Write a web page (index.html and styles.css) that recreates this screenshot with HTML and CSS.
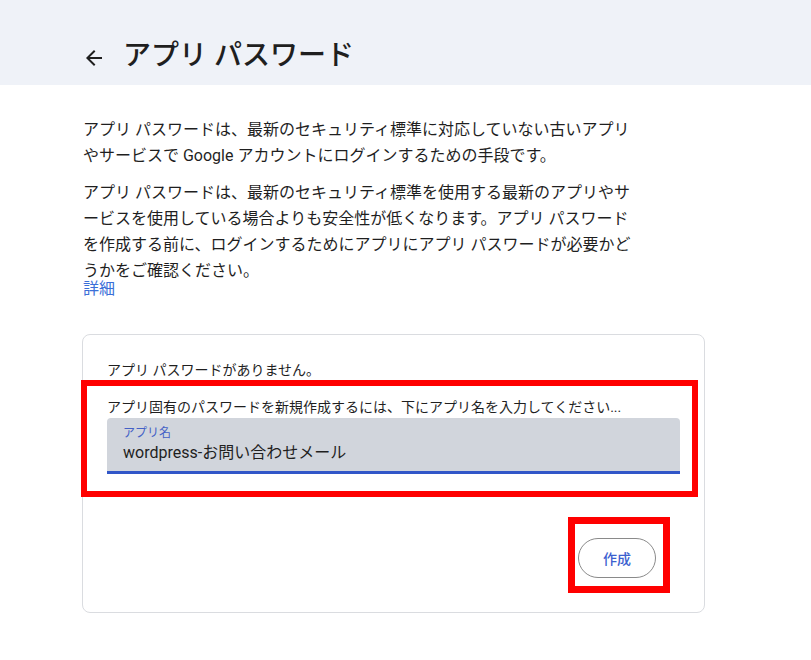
FILE: index.html
```html
<!DOCTYPE html>
<html lang="ja">
<head>
    <meta charset="UTF-8">
    <meta name="viewport" content="width=device-width, initial-scale=1.0">
    <title>アプリ パスワード</title>
    <link rel="stylesheet" href="styles.css">
</head>
<body>
    <!-- ヘッダー -->
    <div class="header">
        <a class="back" href="#">
            <svg width="24" height="24" viewBox="0 0 24 24"><path d="M20 11H7.83l5.59-5.59L12 4l-8 8 8 8 1.41-1.41L7.83 13H20v-2z" fill="#1f1f1f"/></svg>
        </a>
        <h1>アプリ パスワード</h1>
    </div>

    <div class="main">
        <p>アプリ パスワードは、最新のセキュリティ標準に対応していない古いアプリやサービスで Google アカウントにログインするための手段です。</p>
        <p>アプリ パスワードは、最新のセキュリティ標準を使用する最新のアプリやサービスを使用している場合よりも安全性が低くなります。アプリ パスワードを作成する前に、ログインするためにアプリにアプリ パスワードが必要かどうかをご確認ください。</p>
        <a class="more" href="#">詳細</a>

        <!-- カード -->
        <div class="card">
            <div class="empty">アプリ パスワードがありません。</div>
            <div class="hint">アプリ固有のパスワードを新規作成するには、下にアプリ名を入力してください...</div>
            <div class="field">
                <label>アプリ名</label>
                <div class="value">wordpress-お問い合わせメール</div>
            </div>
            <div class="actions">
                <button class="btn-create">作成</button>
            </div>

            <!-- 赤枠 -->
            <div class="mark mark-field"></div>
            <div class="mark mark-button"></div>
        </div>
    </div>
</body>
</html>
```

FILE: styles.css
```css
/* 基本 */
* {
    box-sizing: border-box;
}

body {
    margin: 0;
    background: #fff;
    color: #1f1f1f;
    font-family: Roboto, "Noto Sans CJK JP", sans-serif;
}

.header {
    height: 85px;
    background-color: #eff2f8;
    padding: 36px 0 0 82px;
    display: flex;
    align-items: flex-start;
}

.back {
    display: flex;
    margin-top: 10px;
    width: 24px;
    height: 24px;
}

h1 {
    margin: 0 0 0 17px;
    font-size: 28px;
    line-height: 40px;
    font-weight: 500;
    color: #1f1f1f;
}

.main {
    padding: 32px 0 40px 83px;
}

p {
    width: 552px;
    margin: 0;
    font-size: 16px;
    line-height: 26px;
    color: #1f1f1f;
}

p + p {
    margin-top: 11px;
}

.more {
    display: block;
    margin-top: -3px;
    font-size: 16px;
    line-height: 16px;
    color: #3b6fd8;
    text-decoration: none;
}

.card {
    position: relative;
    width: 623px;
    height: 279px;
    margin: 37px 0 0 -1px;
    border: 1px solid #dadce0;
    border-radius: 8px;
    padding: 25px 24px 0;
    font-size: 14px;
}

.empty {
    line-height: 20px;
    color: #1f1f1f;
}

.hint {
    margin-top: 17px;
    line-height: 20px;
    color: #1f1f1f;
    white-space: nowrap;
}

.field {
    margin-top: 1px;
    height: 56px;
    background-color: #d1d5dc;
    border-radius: 4px 4px 0 0;
    border-bottom: 3px solid #3156c8;
    padding: 7px 16px 0;
}

.field label {
    display: block;
    font-size: 12px;
    line-height: 16px;
    color: #4461c6;
}

.value {
    margin-top: 2px;
    font-size: 16px;
    line-height: 20px;
    color: #1f1f1f;
}

.actions {
    display: flex;
    justify-content: flex-end;
    padding: 64px 24px 0 0;
}

.btn-create {
    width: 78px;
    height: 40px;
    border: 1px solid #8a8a8a;
    border-radius: 20px;
    background: #fff;
    color: #3c5fcf;
    font-family: Roboto, "Noto Sans CJK JP", sans-serif;
    font-size: 14px;
    font-weight: 500;
    cursor: pointer;
}

/* 注釈の赤枠 */
.mark {
    position: absolute;
    border: 6px solid #ff0000;
}

.mark-field {
    left: -2px;
    top: 45px;
    width: 617px;
    height: 117px;
}

.mark-button {
    left: 485px;
    top: 182px;
    width: 102px;
    height: 76px;
    border-width: 7px;
}
```
